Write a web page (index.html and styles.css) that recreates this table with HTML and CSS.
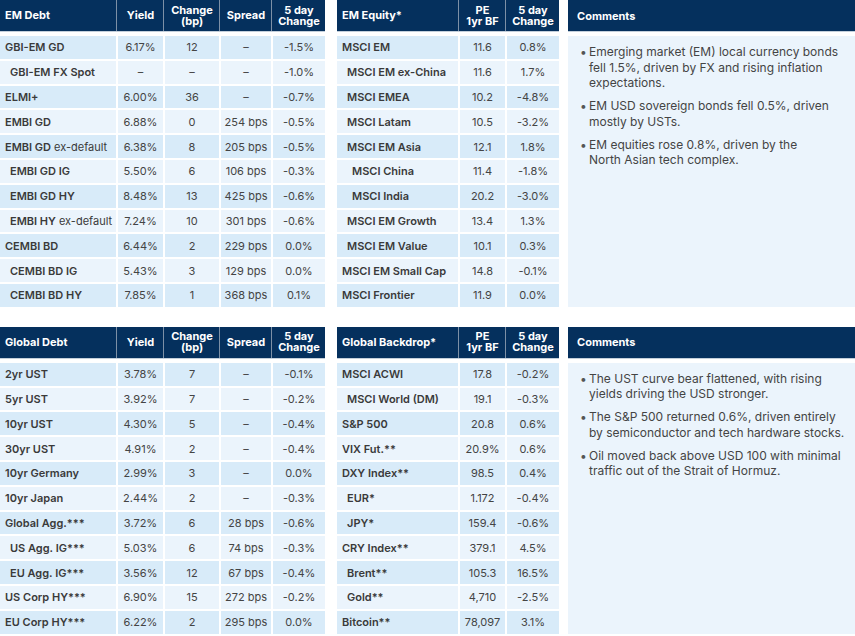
FILE: index.html
```html
<!DOCTYPE html>
<html lang="en">
<head>
<meta charset="utf-8">
<title>Market Summary</title>
<link rel="stylesheet" href="styles.css">
</head>
<body>
<div class="page">
  <section class="block">
    <div class="tbl debt">
      <div class="row head">
        <div class="hc lab">EM Debt</div>
        <div class="hc">Yield</div>
        <div class="hc">Change<br>(bp)</div>
        <div class="hc">Spread</div>
        <div class="hc">5 day<br>Change</div>
      </div>
      <div class="row dk"><div class="c lab">GBI-EM GD</div><div class="c">6.17%</div><div class="c">12</div><div class="c">–</div><div class="c">-1.5%</div></div>
      <div class="row lt"><div class="c lab i1">GBI-EM FX Spot</div><div class="c">–</div><div class="c">–</div><div class="c">–</div><div class="c">-1.0%</div></div>
      <div class="row dk"><div class="c lab">ELMI+</div><div class="c">6.00%</div><div class="c">36</div><div class="c">–</div><div class="c">-0.7%</div></div>
      <div class="row lt"><div class="c lab">EMBI GD</div><div class="c">6.88%</div><div class="c">0</div><div class="c">254 bps</div><div class="c">-0.5%</div></div>
      <div class="row dk"><div class="c lab">EMBI GD <span class="reg">ex-default</span></div><div class="c">6.38%</div><div class="c">8</div><div class="c">205 bps</div><div class="c">-0.5%</div></div>
      <div class="row lt"><div class="c lab i1">EMBI GD IG</div><div class="c">5.50%</div><div class="c">6</div><div class="c">106 bps</div><div class="c">-0.3%</div></div>
      <div class="row dk"><div class="c lab i1">EMBI GD HY</div><div class="c">8.48%</div><div class="c">13</div><div class="c">425 bps</div><div class="c">-0.6%</div></div>
      <div class="row lt"><div class="c lab i1">EMBI HY <span class="reg">ex-default</span></div><div class="c">7.24%</div><div class="c">10</div><div class="c">301 bps</div><div class="c">-0.6%</div></div>
      <div class="row dk"><div class="c lab">CEMBI BD</div><div class="c">6.44%</div><div class="c">2</div><div class="c">229 bps</div><div class="c">0.0%</div></div>
      <div class="row lt"><div class="c lab i1">CEMBI BD IG</div><div class="c">5.43%</div><div class="c">3</div><div class="c">129 bps</div><div class="c">0.0%</div></div>
      <div class="row dk"><div class="c lab i1">CEMBI BD HY</div><div class="c">7.85%</div><div class="c">1</div><div class="c">368 bps</div><div class="c">0.1%</div></div>
    </div>

    <div class="tbl eq">
      <div class="row head">
        <div class="hc lab">EM Equity*</div>
        <div class="hc">PE<br>1yr BF</div>
        <div class="hc">5 day<br>Change</div>
      </div>
      <div class="row dk"><div class="c lab">MSCI EM</div><div class="c">11.6</div><div class="c">0.8%</div></div>
      <div class="row lt"><div class="c lab i1">MSCI EM ex-China</div><div class="c">11.6</div><div class="c">1.7%</div></div>
      <div class="row dk"><div class="c lab i1">MSCI EMEA</div><div class="c">10.2</div><div class="c">-4.8%</div></div>
      <div class="row lt"><div class="c lab i1">MSCI Latam</div><div class="c">10.5</div><div class="c">-3.2%</div></div>
      <div class="row dk"><div class="c lab i1">MSCI EM Asia</div><div class="c">12.1</div><div class="c">1.8%</div></div>
      <div class="row lt"><div class="c lab i2">MSCI China</div><div class="c">11.4</div><div class="c">-1.8%</div></div>
      <div class="row dk"><div class="c lab i2">MSCI India</div><div class="c">20.2</div><div class="c">-3.0%</div></div>
      <div class="row lt"><div class="c lab i1">MSCI EM Growth</div><div class="c">13.4</div><div class="c">1.3%</div></div>
      <div class="row dk"><div class="c lab i1">MSCI EM Value</div><div class="c">10.1</div><div class="c">0.3%</div></div>
      <div class="row lt"><div class="c lab">MSCI EM Small Cap</div><div class="c">14.8</div><div class="c">-0.1%</div></div>
      <div class="row dk"><div class="c lab">MSCI Frontier</div><div class="c">11.9</div><div class="c">0.0%</div></div>
    </div>

    <div class="comments">
      <div class="chead">Comments</div>
      <div class="cbody">
        <ul>
          <li>Emerging market (EM) local currency bonds fell 1.5%, driven by FX and rising inflation expectations.</li>
          <li>EM USD sovereign bonds fell 0.5%, driven mostly by USTs.</li>
          <li>EM equities rose 0.8%, driven by the<br>North Asian tech complex.</li>
        </ul>
      </div>
    </div>
  </section>

  <section class="block">
    <div class="tbl debt">
      <div class="row head">
        <div class="hc lab">Global Debt</div>
        <div class="hc">Yield</div>
        <div class="hc">Change<br>(bp)</div>
        <div class="hc">Spread</div>
        <div class="hc">5 day<br>Change</div>
      </div>
      <div class="row dk"><div class="c lab">2yr UST</div><div class="c">3.78%</div><div class="c">7</div><div class="c">–</div><div class="c">-0.1%</div></div>
      <div class="row lt"><div class="c lab">5yr UST</div><div class="c">3.92%</div><div class="c">7</div><div class="c">–</div><div class="c">-0.2%</div></div>
      <div class="row dk"><div class="c lab">10yr UST</div><div class="c">4.30%</div><div class="c">5</div><div class="c">–</div><div class="c">-0.4%</div></div>
      <div class="row lt"><div class="c lab">30yr UST</div><div class="c">4.91%</div><div class="c">2</div><div class="c">–</div><div class="c">-0.4%</div></div>
      <div class="row dk"><div class="c lab">10yr Germany</div><div class="c">2.99%</div><div class="c">3</div><div class="c">–</div><div class="c">0.0%</div></div>
      <div class="row lt"><div class="c lab">10yr Japan</div><div class="c">2.44%</div><div class="c">2</div><div class="c">–</div><div class="c">-0.3%</div></div>
      <div class="row dk"><div class="c lab">Global Agg.***</div><div class="c">3.72%</div><div class="c">6</div><div class="c">28 bps</div><div class="c">-0.6%</div></div>
      <div class="row lt"><div class="c lab i1">US Agg. IG***</div><div class="c">5.03%</div><div class="c">6</div><div class="c">74 bps</div><div class="c">-0.3%</div></div>
      <div class="row dk"><div class="c lab i1">EU Agg. IG***</div><div class="c">3.56%</div><div class="c">12</div><div class="c">67 bps</div><div class="c">-0.4%</div></div>
      <div class="row lt"><div class="c lab">US Corp HY***</div><div class="c">6.90%</div><div class="c">15</div><div class="c">272 bps</div><div class="c">-0.2%</div></div>
      <div class="row dk"><div class="c lab">EU Corp HY***</div><div class="c">6.22%</div><div class="c">2</div><div class="c">295 bps</div><div class="c">0.0%</div></div>
    </div>

    <div class="tbl eq">
      <div class="row head">
        <div class="hc lab">Global Backdrop*</div>
        <div class="hc">PE<br>1yr BF</div>
        <div class="hc">5 day<br>Change</div>
      </div>
      <div class="row dk"><div class="c lab">MSCI ACWI</div><div class="c">17.8</div><div class="c">-0.2%</div></div>
      <div class="row lt"><div class="c lab i1">MSCI World (DM)</div><div class="c">19.1</div><div class="c">-0.3%</div></div>
      <div class="row dk"><div class="c lab">S&amp;P 500</div><div class="c">20.8</div><div class="c">0.6%</div></div>
      <div class="row lt"><div class="c lab">VIX Fut.**</div><div class="c">20.9%</div><div class="c">0.6%</div></div>
      <div class="row dk"><div class="c lab">DXY Index**</div><div class="c">98.5</div><div class="c">0.4%</div></div>
      <div class="row lt"><div class="c lab i1">EUR*</div><div class="c">1.172</div><div class="c">-0.4%</div></div>
      <div class="row dk"><div class="c lab i1">JPY*</div><div class="c">159.4</div><div class="c">-0.6%</div></div>
      <div class="row lt"><div class="c lab">CRY Index**</div><div class="c">379.1</div><div class="c">4.5%</div></div>
      <div class="row dk"><div class="c lab i1">Brent**</div><div class="c">105.3</div><div class="c">16.5%</div></div>
      <div class="row lt"><div class="c lab i1">Gold**</div><div class="c">4,710</div><div class="c">-2.5%</div></div>
      <div class="row dk"><div class="c lab">Bitcoin**</div><div class="c">78,097</div><div class="c">3.1%</div></div>
    </div>

    <div class="comments">
      <div class="chead">Comments</div>
      <div class="cbody">
        <ul>
          <li>The UST curve bear flattened, with rising yields driving the USD stronger.</li>
          <li>The S&amp;P 500 returned 0.6%, driven entirely by semiconductor and tech hardware stocks.</li>
          <li>Oil moved back above USD 100 with minimal traffic out of the Strait of Hormuz.</li>
        </ul>
      </div>
    </div>
  </section>
</div>
</body>
</html>
```

FILE: styles.css
```css
* { box-sizing: border-box; }

html, body {
  margin: 0;
  padding: 0;
  background: #ffffff;
}

body {
  font-family: Inter, "Noto Sans", "Liberation Sans", sans-serif;
  color: #3b3b3b;
  width: 855px;
  height: 636px;
  overflow: hidden;
}

.page {
  display: flex;
  flex-direction: column;
  gap: 20px;
}

.block {
  display: flex;
  align-items: stretch;
}

.tbl {
  display: flex;
  flex-direction: column;
  gap: 2px;
}

.debt {
  width: 325px;
  margin-right: 12px;
  --cols: 116px 45px 54px 50px 52px;
}

.eq {
  width: 222px;
  margin-right: 9px;
  --cols: 121px 45px 52px;
}

.row {
  display: grid;
  grid-template-columns: var(--cols);
  column-gap: 2px;
  height: 22.8px;
}

.row.head {
  height: 32px;
  background: #05305d;
  border-bottom: 1px solid #c3cfdb;
  margin-bottom: 2px;
}

.hc {
  color: #ffffff;
  font-weight: 700;
  font-size: 11px;
  line-height: 11px;
  display: flex;
  align-items: center;
  justify-content: center;
  text-align: center;
  box-shadow: 1px 0 0 #7d90a6;
}

.hc:last-child { box-shadow: none; }

.hc.lab {
  justify-content: flex-start;
  text-align: left;
  padding-left: 5px;
}

.c {
  font-size: 11px;
  display: flex;
  align-items: center;
  justify-content: center;
  white-space: nowrap;
  color: #444444;
}

.c.lab {
  justify-content: flex-start;
  padding-left: 5px;
  font-weight: 600;
  color: #3a3a3a;
}

.c.lab.i1 { padding-left: 10px; }
.c.lab.i2 { padding-left: 15px; }

.reg {
  font-weight: 400;
  margin-left: 3px;
}

.dk .c { background: #d8ebf9; }
.lt .c { background: #ebf4fc; }

.comments {
  flex: 1;
  display: flex;
  flex-direction: column;
}

.chead {
  height: 32px;
  background: #05305d;
  border-bottom: 1px solid #c3cfdb;
  color: #ffffff;
  font-weight: 700;
  font-size: 11px;
  display: flex;
  align-items: center;
  padding-left: 9px;
  margin-bottom: 4px;
}

.cbody {
  flex: 1;
  background: #ebf4fc;
  padding: 8px 8px 0 12px;
}

.cbody ul {
  list-style: none;
  margin: 0;
  padding: 0 0 0 9px;
}

.cbody li {
  font-size: 12px;
  line-height: 15.5px;
  color: #444444;
  text-indent: -9px;
  margin-bottom: 7.5px;
}

.cbody li::before {
  content: "•";
  display: inline-block;
  width: 9px;
  text-indent: 0;
  color: #555555;
}
```
